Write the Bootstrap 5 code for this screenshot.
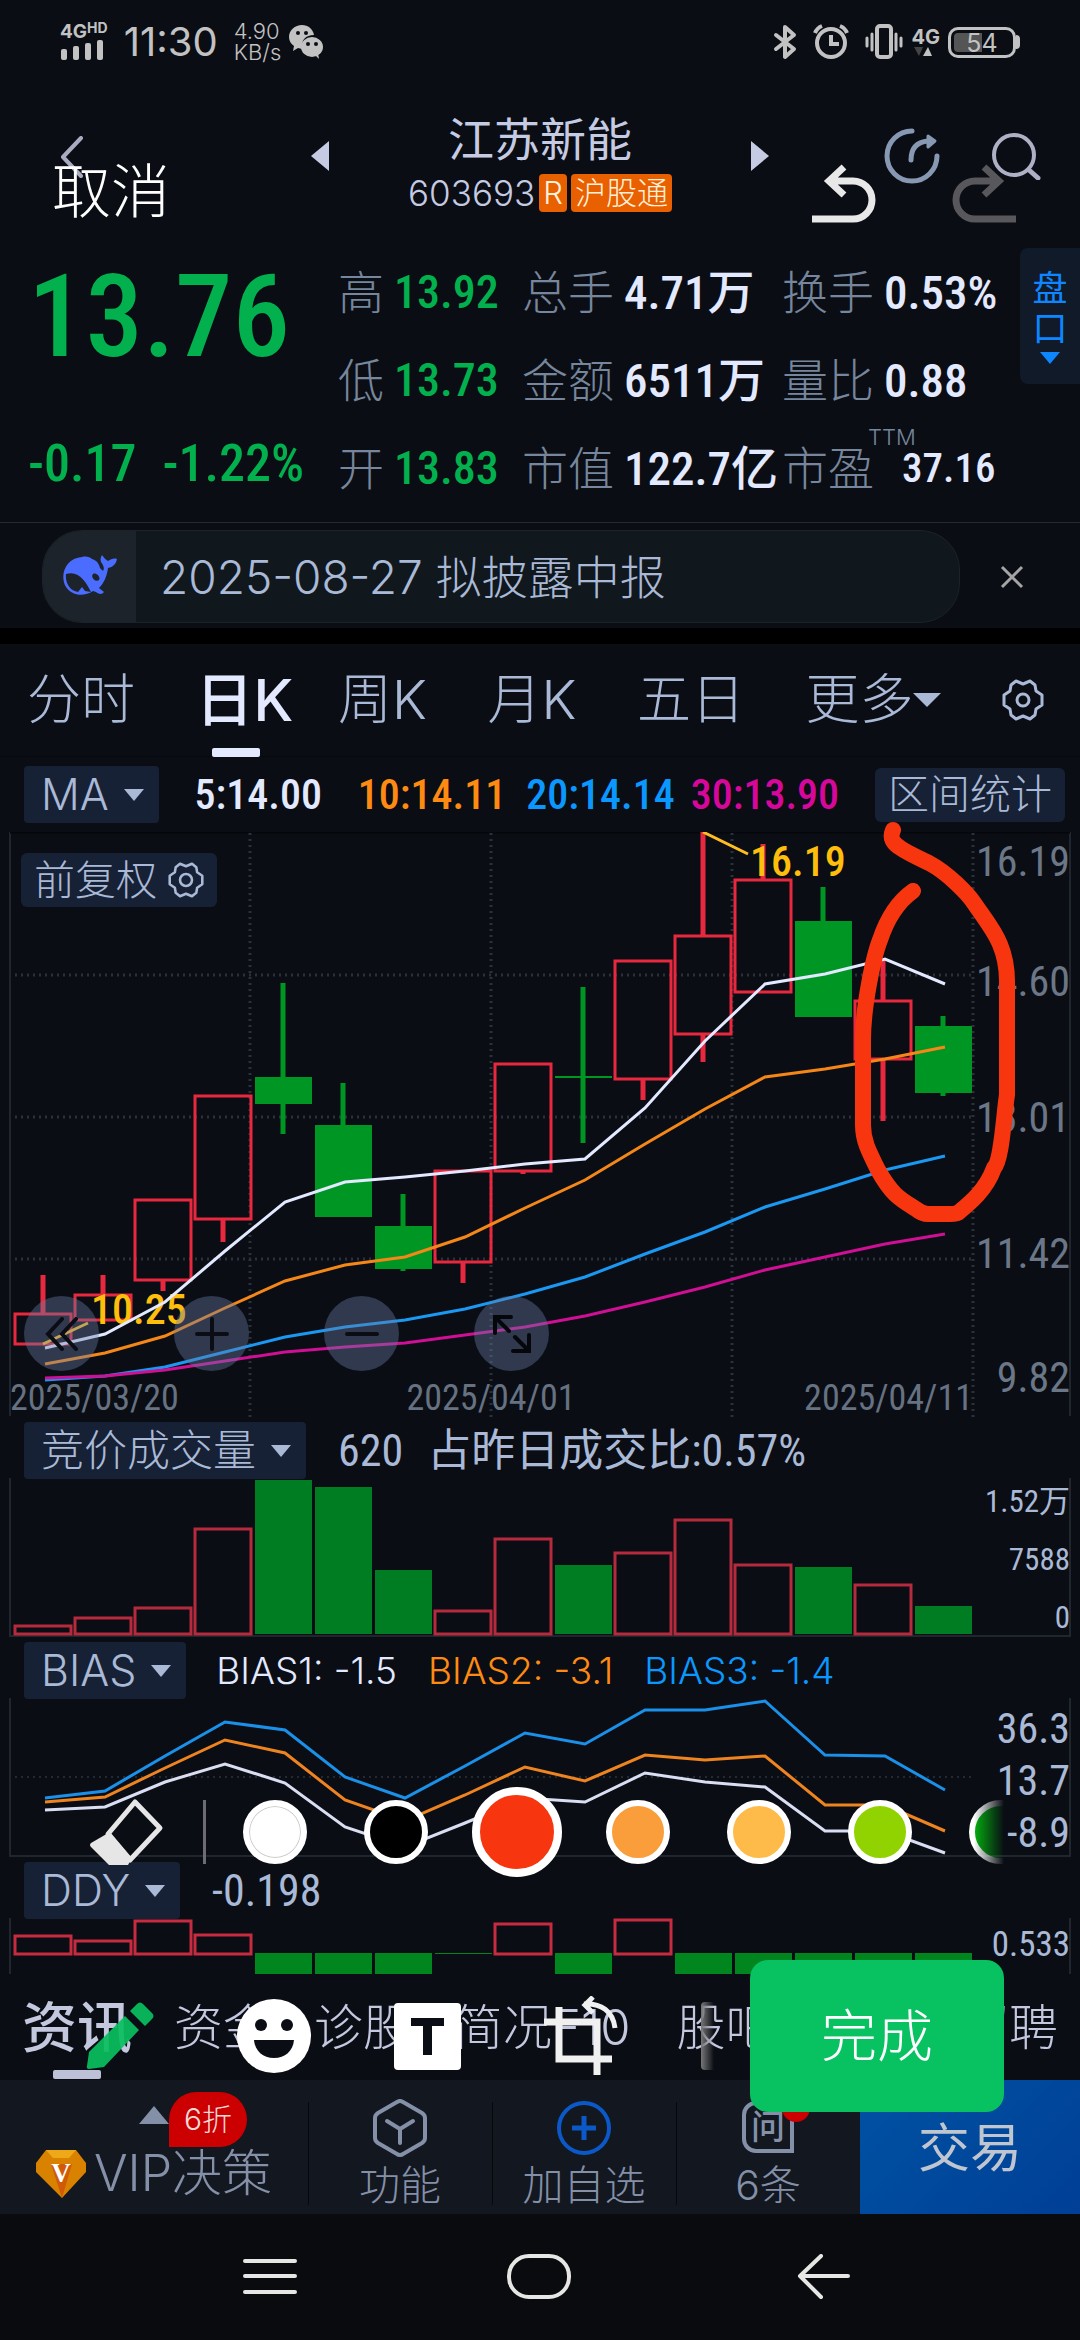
<!DOCTYPE html>
<html lang="zh-CN" data-bs-theme="dark">
<head>
<meta charset="utf-8">
<meta name="viewport" content="width=device-width, initial-scale=1">
<title>江苏新能 603693</title>
<link rel="stylesheet" href="https://cdn.jsdelivr.net/npm/bootstrap@5.3.0/dist/css/bootstrap.min.css">
<style>
:root{--ink:#e3e9ff;--soft:#a9b9d6;--dim:#76869c;--chip:#172135;--price:#02b04e;--ma10:#ff8a12;--ma20:#0a98ff;--ma30:#d8079b}
body{background:#0a0d14;color:var(--soft);font-family:Inter,"Noto Sans CJK SC",sans-serif;font-weight:300;line-height:1}
button{background:none;border:0;padding:0;color:inherit;font-family:inherit;font-weight:inherit;line-height:1}
a{color:inherit;text-decoration:none}
svg{display:block;flex-shrink:0}
.num,.axis{font-family:"Roboto Condensed","Liberation Sans Narrow",Roboto,"Noto Sans CJK SC",sans-serif;font-weight:500}
.axis,.fs-title{font-weight:400}
.status{height:84px;color:#c2c2c2;padding:0 60px}
.clock{font-size:40px;font-weight:400}
.tiny{font-size:22px;line-height:21px}
.netw{font-size:19px;font-weight:700;line-height:16px}
.netw sup{font-size:14px;top:-5px}
.batt{width:68px;height:31px;border:3px solid #c2c2c2;border-radius:10px;font-size:25px;font-weight:400;background:linear-gradient(90deg,#555 50%,transparent 50%) content-box;padding:3px;line-height:20px}
.batt-tip{width:4px;height:14px;border-radius:0 4px 4px 0;background:#c2c2c2}
.head{height:164px}
.back{padding-left:60px;padding-bottom:18px}
.switcher{width:458px;height:144px;color:#c5cbe2}
.stock{font-size:46px;line-height:54px;font-weight:400;margin:0;color:inherit}
.code{font-size:35px;line-height:38px}
.tag{background:#e96000;color:#fff1dc;border-radius:4px;font-size:31px;line-height:38px;padding:0 4px}
.head-tools{padding-right:38px;padding-bottom:20px;gap:52px}
.cancel{left:52px;top:78px;font-size:59px;color:#fff}
.history{right:64px;top:80px}
.quote{height:275px;border-bottom:1px solid #252b33;padding-left:28px}
.last-col{width:310px;color:var(--price)}
.last{font-size:115px;line-height:90px;padding-top:24px}
.chg{font-size:52px;line-height:52px;padding-top:76px;gap:26px}
.facts{display:grid;grid-template-columns:56px 128px 102px 158px 102px 130px;grid-auto-rows:88px;align-items:center;font-size:46px;margin:0}
.facts dt{color:var(--dim);font-weight:300;white-space:nowrap}
.facts dd{margin:0;color:var(--ink);font-size:47px;white-space:nowrap}
.facts dd.fall{color:var(--price);font-size:46px}
.facts dd.pe{font-size:41px;padding-left:18px}
.facts sup{font-size:22px;left:86px;top:-8px;position:absolute}
.panel-tab{width:60px;height:136px;background:#111a28;border-radius:8px 0 0 8px;color:#0d86ff;font-size:35px;line-height:40px;font-weight:400}
.notice{height:105px;padding:2px 48px 0 42px}
.pill{width:918px;height:93px;border-radius:40px;background:#10171d;border:1px solid #1b2228;font-size:46px;overflow:hidden}
.pill-logo{width:93px;height:93px;background:#1c232a}
.band{height:16px;background:#000}
.tabs{height:113px;border-bottom:1px solid #05080c;padding:0 36px 0 27px;font-size:54px}
.tabs a,.news a{position:relative;white-space:nowrap}
.tabs a.on{color:var(--ink);font-size:58px;font-weight:500}
.tabs a.on::after,.news a.on::after{content:"";position:absolute;left:50%;margin-left:-32px;bottom:-28px;width:48px;height:9px;background:var(--ink);border-radius:2px}
.bar-row{height:61px;padding:6px 15px 0 24px}
.ma-row{height:75px;padding-top:0}
.chip{background:var(--chip);border-radius:4px;height:57px;padding:0 15px 0 17px;font-size:43px;gap:15px;display:inline-flex;align-items:center;white-space:nowrap;flex-shrink:0}
.chip-plain{background:var(--chip);border-radius:6px;height:54px;padding:0 13px;font-size:41px;white-space:nowrap}
.caret{width:0;height:0;border:10px solid transparent;border-top:12px solid currentColor;border-bottom:0;flex-shrink:0}
.caret-lg{border-width:14px 14px 0}
.ma{font-size:42px;white-space:nowrap}
.ma5{color:var(--ink)}.ma10{color:var(--ma10)}.ma20{color:var(--ma20)}.ma30{color:var(--ma30)}
.adj{left:21px;top:21px;gap:11px;display:flex;align-items:center}
.chart{width:100%;height:auto}
.rounds{left:24px;top:464px;gap:75px}
.rounds button{width:75px;height:75px;border-radius:50%;background:rgba(105,126,165,.4);display:grid;place-items:center}
.mark-up{z-index:5;left:0;top:0;width:100%;pointer-events:none}
.fs-title{font-size:44px;white-space:nowrap}
.bias-vals{font-size:37px;gap:31px;margin-left:30px;white-space:nowrap}
.palette{left:0;right:76px;top:128px;height:134px;z-index:6;padding-left:86px;overflow:hidden;-webkit-mask-image:linear-gradient(90deg,#000 97%,transparent);mask-image:linear-gradient(90deg,#000 97%,transparent)}
.sep{width:3px;height:64px;background:#6b6d72;margin:0 37px 0 39px;flex-shrink:0}
.swatches{gap:57px;flex-shrink:0}
.dot{appearance:none;width:64px;height:64px;border-radius:50%;border:6px solid #fff;margin:0;flex-shrink:0}
.dot:checked{width:90px;height:90px;border-width:8px;margin:0 -13px}
.c-white{background:#fff;box-shadow:inset 0 0 0 1px #ccc}.c-black{background:#000}.c-red{background:#f73610}.c-orange{background:#fa9d3b}.c-yellow{background:#ffbb4a}.c-lime{background:#91d300}.c-green{background:#05b010}
.news{height:106px;padding:0 22px;font-size:49px;color:#c4c8df;gap:42px}
.news a.on{font-size:55px;font-weight:500}
.news a.on::after{background:#bcc1d8;bottom:-24px;margin-left:-24px}
.tools{left:86px;right:76px;top:-14px;height:152px;z-index:7;color:#fff}
.tool-set{gap:83px}
.fade-bar{width:13px;height:68px;border-radius:4px 0 0 4px;background:linear-gradient(90deg,#777,transparent)}
.done{width:254px;height:152px;border-radius:18px;background:#08c160;font-size:56px}
.dock{height:134px;background:#13171f;color:#8390a8;font-size:41px}
.dock>a{flex:184 1 0}
.dock>a.vip{flex:308 1 0;font-size:50px}
.dock>a.deal{flex:220 1 0;background:linear-gradient(135deg,#0052a4,#003f95);color:#bfc6cf;font-size:52px;font-weight:400;padding-top:3px}
.dock>a+a:not(.deal)::before{content:"";position:absolute;left:0;top:22px;bottom:9px;width:1px;background:#06080c}
.off{left:169px;top:12px;height:55px;width:78px;background:#cc0000;color:#f1dada;font-size:30px;border-radius:28px 28px 28px 0;line-height:55px}
.tri{left:139px;top:26px}
.ask{width:52px;height:52px;border:4px solid #8390a8;border-radius:14px 14px 0 14px;font-size:34px;font-weight:500;line-height:44px}
.red-dot{width:28px;height:28px;border-radius:50%;background:#cc0000;right:50px;top:14px}
.sysnav{height:126px;background:#0a0b0f;color:#e6e6e4;padding:0 229px 0 243px}
</style>
</head>
<body>
<div class="position-relative overflow-hidden">

<header class="status d-flex align-items-center">
  <div class="netw">4G<sup>HD</sup>
    <svg width="44" height="20" fill="currentColor" aria-hidden="true"><rect x="1" y="9" width="6" height="11" rx="2"/><rect x="13" y="6" width="6" height="14" rx="2"/><rect x="25" y="3" width="6" height="17" rx="2"/><rect x="37" width="6" height="20" rx="2"/></svg>
  </div>
  <div class="clock ms-3">11:30</div>
  <div class="tiny ms-3">4.90<br>KB/s</div>
  <svg class="ms-2" width="34" height="34" viewBox="0 0 34 34" aria-hidden="true"><path d="M13 0C6 0 0 5 0 12c0 4 2 7 5 9l-1 5 5-3 4 1h1C11 15 17 10 25 10 24 4 19 0 13 0z" fill="#c2c2c2"/><ellipse cx="23" cy="22" rx="11" ry="10" fill="#c2c2c2"/><path d="M26 30l4 4-1-6z" fill="#c2c2c2"/><g fill="#0a0d14"><circle cx="9" cy="8" r="2"/><circle cx="17" cy="8" r="2"/><circle cx="19" cy="19" r="2"/><circle cx="27" cy="19" r="2"/></g></svg>
  <div class="ms-auto d-flex align-items-center">
    <svg width="24" height="36" viewBox="0 0 24 36" fill="none" stroke="#c2c2c2" stroke-width="4" stroke-linejoin="round" stroke-linecap="round" aria-hidden="true"><path d="M3 11l18 14-9 8V3l9 8L3 25"/></svg>
    <svg class="ms-3" width="36" height="36" viewBox="0 0 36 36" fill="none" stroke="#c2c2c2" stroke-width="4" aria-hidden="true"><circle cx="18" cy="19" r="14"/><path d="M18 11v9h8M2 9a12 12 0 0 1 7-7M27 2a12 12 0 0 1 7 7"/></svg>
    <svg class="ms-3" width="38" height="36" viewBox="0 0 38 36" fill="none" stroke="#c2c2c2" stroke-width="3" stroke-linecap="round" aria-hidden="true"><rect x="12" y="2" width="14" height="31" rx="3" stroke-width="4"/><path d="M7 10v16M2 14v8M31 10v16M36 14v8"/></svg>
    <div class="netw ms-2 lh-1 text-center">
      <div class="fs-5 fw-bold lh-1">4G</div>
      <svg width="24" height="10" aria-hidden="true"><path d="M3 0h9l-4 9z" fill="#444"/><path d="M12 9h9L17 0z" fill="#c2c2c2"/></svg>
    </div>
    <div class="batt ms-2 text-center">54</div><div class="batt-tip"></div>
  </div>
</header>

<section class="head position-relative d-flex align-items-center justify-content-between">
  <button class="back" aria-label="返回"><svg width="24" height="42" viewBox="0 0 24 42" fill="none" stroke="#a9acc0" stroke-width="4" stroke-linecap="round" stroke-linejoin="round"><path d="M21 2L3 21l18 19"/></svg></button>
  <div class="switcher d-flex justify-content-between position-absolute start-50 translate-middle-x top-0">
    <button aria-label="上一只"><svg width="18" height="30" fill="currentColor"><path d="M18 0v30L0 15z"/></svg></button>
    <div class="text-center pt-4 mt-1">
      <h1 class="stock">江苏新能</h1>
      <div class="d-flex align-items-center gap-1 mt-2"><span class="code">603693</span><span class="tag">R</span><span class="tag">沪股通</span></div>
    </div>
    <button aria-label="下一只"><svg width="18" height="30" fill="currentColor"><path d="M0 0v30l18-15z"/></svg></button>
  </div>
  <div class="head-tools d-flex align-items-center">
    <button aria-label="分享"><svg width="56" height="56" viewBox="0 0 56 56" fill="none" stroke="#8798b2" stroke-width="5" stroke-linecap="round"><path d="M28 3a25 25 0 1 0 25 25M27 32c0-12 6-18 17-19"/><path d="M44 8l7 5-7 6z" fill="#8798b2" stroke-width="3" stroke-linejoin="round"/></svg></button>
    <button aria-label="搜索"><svg width="50" height="48" viewBox="0 0 50 48" fill="none" stroke="#aeb0c6" stroke-width="4" stroke-linecap="round"><circle cx="22" cy="23" r="20"/><path d="M37 38l9 8" stroke-width="5"/></svg></button>
  </div>
  <button class="cancel position-absolute">取消</button>
  <div class="history position-absolute d-flex">
    <button aria-label="撤销" class="me-5 pe-4"><svg width="66" height="60" viewBox="0 0 66 60" fill="none" stroke="#e8e8e8" stroke-width="7"><path d="M0 55h41a19 19 0 0 0 0-38H18M32 3L17 17l15 14"/></svg></button>
    <button aria-label="重做"><svg width="66" height="60" viewBox="0 0 66 60" fill="none" stroke="#58585c" stroke-width="7"><path d="M66 55H25a19 19 0 0 1 0-38h23M34 3l15 14-15 14"/></svg></button>
  </div>
</section>

<section class="quote d-flex">
  <div class="last-col num">
    <div class="last">13.76</div>
    <div class="chg d-flex"><span>-0.17</span><span>-1.22%</span></div>
  </div>
  <dl class="facts">
    <dt>高</dt><dd class="num fall">13.92</dd><dt>总手</dt><dd class="num">4.71万</dd><dt>换手</dt><dd class="num">0.53%</dd>
    <dt>低</dt><dd class="num fall">13.73</dd><dt>金额</dt><dd class="num">6511万</dd><dt>量比</dt><dd class="num">0.88</dd>
    <dt>开</dt><dd class="num fall">13.83</dd><dt>市值</dt><dd class="num">122.7亿</dd><dt class="position-relative">市盈<sup>TTM</sup></dt><dd class="num pe">37.16</dd>
  </dl>
  <button class="panel-tab ms-auto d-flex flex-column align-items-center justify-content-center"><span>盘</span><span>口</span><i class="caret mt-1"></i></button>
</section>

<section class="notice d-flex align-items-center justify-content-between">
  <a href="#" class="pill d-flex align-items-center"><span class="pill-logo d-grid align-items-center justify-content-center me-4"><svg width="56" height="44" viewBox="0 0 56 44" fill="#4a6dff"><path d="M20 2c4-1 8 0 10 2 4 1 7 4 8 9l3 3c2-3 0-6-2-9-1-3 0-5 1-7 2 3 4 5 6 6 3-2 6-3 9-2-1 5-4 8-9 9-1 8-4 15-9 20l5 4c-2 3-6 2-8 0l-3-1c-9 6-21 5-27-4C-3 20 4 3 20 2zM4 19c-1 9 4 17 12 18l4-5 3 4 6 1C24 27 17 15 4 19zm27 0c-3 3 3 9 6 6 2-3-3-8-6-6z"/></svg></span><span>2025-08-27 拟披露中报</span></a>
  <button aria-label="关闭"><svg width="42" height="24" viewBox="0 0 42 24" stroke="#a5a5a5" stroke-width="3"><path d="M12 2l20 20M32 2L12 22"/></svg></button>
</section>
<div class="band"></div>

<nav class="tabs d-flex align-items-center justify-content-between">
  <a href="#">分时</a><a href="#" class="on ms-3">日K</a><a href="#">周K</a><a href="#" class="ms-3">月K</a><a href="#" class="ms-3">五日</a><a href="#" class="d-flex align-items-center ms-3">更多<i class="caret caret-lg"></i></a>
  <button aria-label="设置" class="ms-3"><svg width="42" height="42" viewBox="0 0 42 42" fill="none" stroke="#a9b9d6" stroke-width="3" stroke-linejoin="round"><path d="M14 2l7 3 7-3 5 4 1 6 6 4v10l-6 4-1 6-5 4-7-3-7 3-5-4-1-6-6-4V16l6-4 1-6z"/><circle cx="21" cy="21" r="6"/></svg></button>
</nav>

<div class="bar-row ma-row d-flex align-items-center justify-content-between">
  <button class="chip">MA<i class="caret"></i></button>
  <span class="ma num ma5">5:14.00</span>
  <span class="d-flex gap-3"><span class="ma num ma10 me-1">10:14.11</span><span class="ma num ma20">20:14.14</span><span class="ma num ma30">30:13.90</span></span>
  <button class="chip-plain">区间统计</button>
</div>

<section class="position-relative">
  <svg class="chart" viewBox="0 832 1080 585" role="img" aria-label="日K线图">
    <path d="M10 832V1416M1070 832V1416" stroke="#20262d" stroke-width="2"/><path d="M10 832H1070" stroke="#05070a" stroke-width="3"/>
    <g stroke="#2b313a" stroke-width="3" stroke-dasharray="2 4"><path d="M15 975H973M15 1117H973M15 1259H973"/><path d="M250 833V1417M491 833V1417M732 833V1417M973 833V1417"/></g>
    <g class="axis" font-size="36" fill="#667282"><text x="10" y="1410">2025/03/20</text><text x="491" y="1410" text-anchor="middle">2025/04/01</text><text x="973" y="1410" text-anchor="end">2025/04/11</text></g>
    <g class="axis" font-size="42" fill="#6b7787" text-anchor="end"><text x="1070" y="876">16.19</text><text x="1070" y="996">14.60</text><text x="1070" y="1132">13.01</text><text x="1070" y="1268">11.42</text><text x="1070" y="1392">9.82</text></g>
    <g id="candles"></g>
    <g class="num" font-size="42" fill="#ffbe0b"><text x="750" y="876">16.19</text><text x="91" y="1324">10.25</text></g>
    <path d="M703 832L748 854M43 1344L88 1323" stroke="#ffbe20" stroke-width="3"/>
    <g id="malines" fill="none" stroke-width="3"></g>
  </svg>
  <button class="chip-plain adj position-absolute">前复权<svg width="36" height="36" viewBox="0 0 42 42" fill="none" stroke="#a9b9d6" stroke-width="3" stroke-linejoin="round"><path d="M14 2l7 3 7-3 5 4 1 6 6 4v10l-6 4-1 6-5 4-7-3-7 3-5-4-1-6-6-4V16l6-4 1-6z"/><circle cx="21" cy="21" r="7"/></svg></button>
  <div class="rounds position-absolute d-flex">
    <button aria-label="最左"><svg width="34" height="34" fill="none" stroke="#0a0d14" stroke-width="4" stroke-linecap="round"><path d="M17 2L3 17l14 15M31 2L17 17l14 15"/></svg></button>
    <button aria-label="放大"><svg width="34" height="34" stroke="#0a0d14" stroke-width="4" stroke-linecap="round"><path d="M17 2v30M2 17h30"/></svg></button>
    <button aria-label="缩小"><svg width="34" height="34" stroke="#0a0d14" stroke-width="4" stroke-linecap="round"><path d="M2 17h30"/></svg></button>
    <button aria-label="全屏"><svg width="38" height="38" fill="none" stroke="#05070a" stroke-width="4" stroke-linecap="round"><path d="M2 18V2h16M2 2l14 14M36 20v16H20M36 36L22 22"/></svg></button>
  </div>
  <svg class="mark-up position-absolute overflow-visible" viewBox="0 832 1080 585" fill="none" stroke="#f73610" stroke-width="16" stroke-linecap="round" stroke-linejoin="round" aria-hidden="true"><path d="M893 830C888 842 895 847 929 863C948 873 968 894 974 903C990 927 1008 944 1007 985V1095C1004 1112 1002 1160 994 1168C986 1190 970 1203 959 1212Q957 1214 950 1214H928Q922 1214 916 1209C900 1199 892 1195 878 1170C868 1150 863 1140 863 1125V1040C863 1005 874 955 880 940C886 922 896 903 913 891"/></svg>
</section>

<div class="bar-row d-flex align-items-center">
  <button class="chip">竞价成交量<i class="caret"></i></button><span class="num ms-4 ps-2 fs-title">620</span><span class="num ms-4 fs-title">占昨日成交比:0.57%</span>
</div>
<svg class="chart" viewBox="0 1478 1080 159" role="img" aria-label="成交量">
  <path d="M10 1478V1636H1070V1478" fill="none" stroke="#20262d" stroke-width="2"/>
  <g id="vol"></g>
  <g class="axis" font-size="31" fill="#a9b9d6" text-anchor="end"><text x="1070" y="1512">1.52万</text><text x="1070" y="1570">7588</text><text x="1070" y="1628">0</text></g>
</svg>

<section class="position-relative">
  <div class="bar-row d-flex align-items-center">
    <button class="chip">BIAS<i class="caret"></i></button>
    <div class="d-flex bias-vals"><span class="ma5">BIAS1: -1.5</span><span class="ma10">BIAS2: -3.1</span><span class="ma20">BIAS3: -1.4</span></div>
  </div>
  <svg class="chart" viewBox="0 1698 1080 159" role="img" aria-label="BIAS">
    <path d="M10 1698V1856H1070V1698" fill="none" stroke="#20262d" stroke-width="2"/><path d="M15 1777H973" stroke="#242a31" stroke-width="2" stroke-dasharray="2 4"/>
    <g id="bias" fill="none" stroke-width="3"></g>
    <g class="axis" font-size="42" fill="#a9b9d6" text-anchor="end"><text x="1070" y="1743">36.3</text><text x="1070" y="1795">13.7</text><text x="1070" y="1847">-8.9</text></g>
  </svg>
  <div class="palette position-absolute d-flex align-items-center">
    <button aria-label="橡皮擦"><svg width="78" height="68" viewBox="0 0 78 68" aria-hidden="true"><path d="M49 4L74 30 44 62 22 36z" fill="none" stroke="#e6e6e6" stroke-width="5" stroke-linejoin="round"/><path d="M24 34L46 60 42 67H23L5 49Q3 47 5 45z" fill="#e6e6e6"/></svg></button>
    <div class="sep"></div>
    <div class="swatches d-flex align-items-center" role="radiogroup" aria-label="颜色">
      <input type="radio" name="ink" class="dot c-white" aria-label="白"><input type="radio" name="ink" class="dot c-black" aria-label="黑"><input type="radio" name="ink" class="dot c-red" aria-label="红" checked><input type="radio" name="ink" class="dot c-orange" aria-label="橙"><input type="radio" name="ink" class="dot c-yellow" aria-label="黄"><input type="radio" name="ink" class="dot c-lime" aria-label="青"><input type="radio" name="ink" class="dot c-green" aria-label="绿">
    </div>
  </div>
</section>

<div class="bar-row d-flex align-items-center">
  <button class="chip">DDY<i class="caret"></i></button><span class="num ms-4 ps-2 fs-title">-0.198</span>
</div>
<svg class="chart" viewBox="0 1918 1080 56" role="img" aria-label="DDY">
  <path d="M10 1918V1974M1070 1918V1974" stroke="#20262d" stroke-width="2"/>
  <g id="ddy"></g>
  <text class="axis" x="1070" y="1956" font-size="35" fill="#a9b9d6" text-anchor="end">0.533</text>
</svg>

<section class="news position-relative d-flex align-items-center">
  <a href="#" class="on">资讯</a><a href="#">资金</a><a href="#">诊股</a><a href="#" class="me-1">简况F10</a><a href="#">股吧</a><a href="#" class="ms-auto">招聘</a>
  <div class="tools position-absolute d-flex align-items-center justify-content-between">
    <div class="tool-set d-flex align-items-center">
      <button aria-label="画笔"><svg width="68" height="68" viewBox="0 0 68 68" fill="#0abf5f" fill-opacity=".93"><path d="M39 14L53 28 18 65 3 67Q0 67 1 64L3 50zM44 9L51 2Q54-1 57 2L66 11Q69 14 66 17L59 24z"/></svg></button>
      <button aria-label="表情"><svg width="74" height="74" viewBox="0 0 74 74"><circle cx="37" cy="37" r="37" fill="#fff"/><g fill="#0a0d14"><circle cx="24" cy="26" r="6"/><circle cx="50" cy="26" r="6"/><path d="M17 41h40c-1 11-9 18-20 18s-19-7-20-18z"/></g></svg></button>
      <button aria-label="文字"><svg width="67" height="67" viewBox="0 0 67 67"><rect width="67" height="67" rx="4" fill="#fff"/><path d="M17 15h33v8H38v29h-9V23H17z" fill="#0a0d14"/></svg></button>
      <button aria-label="裁剪"><svg width="74" height="80" viewBox="0 0 74 80" fill="none" stroke="#f0f0f0" stroke-width="7"><path d="M15 11v52h53M0 26h53v53"/><path d="M40 8c17-1 29 7 31 24M49 1l-8 8 8 8" stroke-width="5"/></svg></button>
      <div class="fade-bar"></div>
    </div>
    <button class="done flex-shrink-0">完成</button>
  </div>
</section>

<nav class="dock d-flex">
  <a href="#" class="vip position-relative d-flex align-items-end justify-content-center gap-2 pb-3">
    <svg class="tri position-absolute" width="30" height="18" fill="#8390a8"><path d="M15 0l15 18H0z"/></svg><span class="off position-absolute text-center">6折</span>
    <svg width="50" height="48" viewBox="0 0 50 48"><path d="M10 0h30l10 13v9L26 48 0 22v-9z" fill="#d98200"/><path d="M10 0h30l-7 8H17z" fill="#efa818"/><path d="M15 14L26 48 36 14z" fill="#d05a08"/><text x="25" y="32" text-anchor="middle" font-family="Liberation Serif,serif" font-weight="700" font-size="27" fill="#fff">V</text></svg>
    <span>VIP决策</span></a>
  <a href="#" class="position-relative d-flex flex-column align-items-center justify-content-end gap-2 pb-2"><svg width="54" height="58" viewBox="0 0 54 58" fill="none" stroke="#8390a8" stroke-width="4" stroke-linejoin="round" stroke-linecap="round"><path d="M24 3q3-2 6 0l19 11q3 2 3 5v20q0 3-3 5L30 55q-3 2-6 0L5 44q-3-2-3-5V19q0-3 3-5z"/><path d="M14 22l13 8 13-8M27 30v14"/></svg><span>功能</span></a>
  <a href="#" class="position-relative d-flex flex-column align-items-center justify-content-end gap-2 pb-2"><svg width="56" height="58" viewBox="0 0 56 58" fill="none" stroke="#0b58c8" stroke-width="4"><circle cx="28" cy="29" r="25"/><path d="M28 17v24M16 29h24" stroke-width="5"/></svg><span>加自选</span></a>
  <a href="#" class="position-relative d-flex flex-column align-items-center justify-content-end gap-2 pb-2"><span class="ask text-center mb-1">问</span><i class="red-dot position-absolute"></i><span>6条</span></a>
  <a href="#" class="deal d-flex align-items-center justify-content-center">交易</a>
</nav>

<nav class="sysnav d-flex align-items-center justify-content-between">
  <button aria-label="菜单"><svg width="54" height="46" stroke="currentColor" stroke-width="4" stroke-linecap="round"><path d="M2 7h50M2 22h50M2 38h50"/></svg></button>
  <button aria-label="主页" class="me-3"><svg width="64" height="46" fill="none" stroke="currentColor" stroke-width="4"><rect x="2" y="2" width="60" height="41" rx="20"/></svg></button>
  <button aria-label="返回"><svg width="54" height="46" fill="none" stroke="currentColor" stroke-width="4" stroke-linecap="round" stroke-linejoin="round"><path d="M51 22H3M24 2L3 22l21 21"/></svg></button>
</nav>
</div>
<script>
const pitch = 60, first = 43, half = 28;
// [direction, body top, body bottom, high, low]
const days = [[1,1314,1344,1275,1344],[1,1295,1320,1275,1320],[1,1200,1280,1200,1291],[1,1096,1219,1096,1242],[0,1077,1104,983,1134],[0,1125,1217,1083,1217],[0,1226,1269,1194,1271],[1,1171,1262,1171,1283],[1,1064,1171,1064,1174],[0,1076,1078,987,1143],[1,961,1079,961,1100],[1,936,1034,832,1062],[1,880,992,844,992],[0,921,1017,887,1017],[1,1001,1059,960,1121],[0,1026,1093,1016,1096]];
const box = (x, up, top, bottom, red, green) => up
  ? `<rect x="${x-half}" y="${top}" width="${half*2}" height="${bottom-top}" fill="none" stroke="${red}" stroke-width="3"/>`
  : `<rect x="${x-half}" y="${top}" width="${half*2+1}" height="${bottom-top}" fill="${green}"/>`;
candles.innerHTML = days.map(([up,t,b,h,l],i) => {
  const x = first + i*pitch, c = up ? '#e8283e' : '#009624';
  return box(x,up,t,b,c,c) + `<path d="M${x} ${h}V${t}M${x} ${b}V${l}" stroke="${c}" stroke-width="5"/>`;
}).join('');
const curve = (c, ys) => `<polyline stroke="${c}" points="${ys.map((y,i)=>`${first+2+i*pitch},${y}`).join(' ')}"/>`;
malines.innerHTML =
  curve('#1b98f2',[1380,1376,1367,1352,1337,1327,1320,1309,1294,1277,1254,1232,1207,1189,1170,1156]) +
  curve('#cf0f94',[1378,1376,1370,1361,1352,1347,1343,1335,1327,1316,1302,1287,1270,1257,1244,1234]) +
  curve('#f58718',[1364,1353,1336,1308,1281,1265,1257,1237,1208,1180,1144,1109,1077,1069,1059,1047]) +
  curve('#e3e9ff',[1348,1334,1302,1251,1202,1182,1177,1171,1164,1159,1108,1041,984,974,959,984]);
vol.innerHTML = [[1,1626],[1,1618],[1,1608],[1,1529],[0,1480],[0,1487],[0,1570],[1,1611],[1,1539],[0,1565],[1,1553],[1,1520],[1,1565],[0,1567],[1,1585],[0,1606]]
  .map(([up,t],i) => box(first+i*pitch,up,t,1634,'#b52a3c','#007d23')).join('');
bias.innerHTML =
  curve('#1b90e8',[1798,1791,1756,1722,1730,1777,1798,1766,1733,1744,1710,1710,1701,1755,1756,1790]) +
  curve('#ee8420',[1802,1797,1768,1740,1753,1800,1821,1795,1767,1781,1755,1760,1756,1805,1805,1831]) +
  curve('#d9def2',[1810,1807,1782,1764,1783,1827,1847,1823,1798,1802,1773,1782,1787,1831,1831,1853]);
ddy.innerHTML = [[1,1936],[1,1941],[1,1921],[1,1935],[0,1974],[0,1974],[0,1974],[0,1954],[1,1924],[0,1974],[1,1920],[0,1974],[0,1974],[0,1974],[0,1974],[0,1974]]
  .map(([up,y],i) => box(first+i*pitch, up, up?y:1953, up?1954:y, '#c62b3f','#00851f')).join('');
</script>
<script src="https://cdn.jsdelivr.net/npm/bootstrap@5.3.0/dist/js/bootstrap.bundle.min.js"></script>
</body>
</html>
